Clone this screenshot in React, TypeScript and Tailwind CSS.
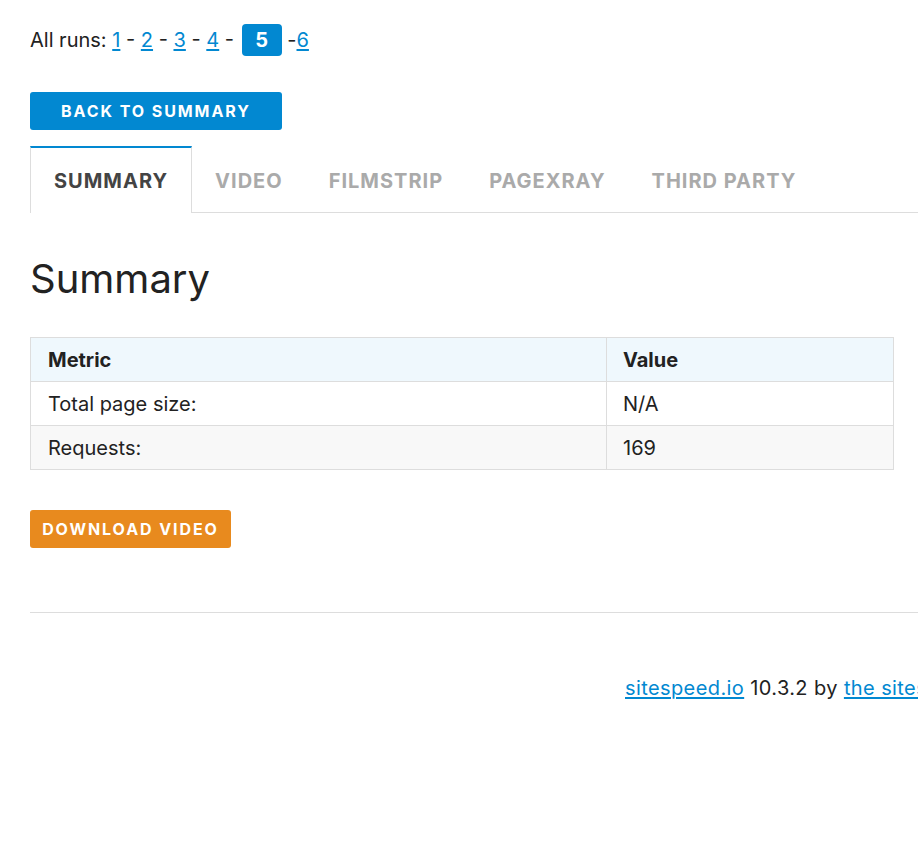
import React from 'react';

const tabs = ['Summary', 'Video', 'Filmstrip', 'PageXray', 'Third party'];

const App: React.FC = () => {
  const runs = [1, 2, 3, 4];

  return (
    <div className="min-h-screen w-[918px] overflow-hidden bg-white text-[#222] font-['Inter','Noto_Sans',sans-serif] text-[20px]">
      <div className="w-[1620px] pl-[30px] pt-[24px]">
        {/* Run selector */}
        <div className="flex items-center h-[32px] whitespace-nowrap">
          <span>All runs:&nbsp;</span>
          {runs.map((r) => (
            <span key={r}>
              <a href="#" className="text-[#0288d1] underline underline-offset-2">{r}</a>
              <span>&nbsp;-&nbsp;</span>
            </span>
          ))}
          <span className="ml-[2px] inline-flex items-center justify-center h-[32px] w-[40px] rounded-[4px] bg-[#0288d1] text-white font-bold">5</span>
          <span>&nbsp;-</span>
          <a href="#" className="text-[#0288d1] underline underline-offset-2">6</a>
        </div>

        {/* Back button */}
        <div className="mt-[36px]">
          <button className="h-[38px] w-[252px] rounded-[3px] bg-[#0288d1] text-white text-[16px] font-bold uppercase tracking-[0.12em]">
            Back to summary
          </button>
        </div>

        {/* Tabs */}
        <div className="mt-[16px] flex h-[67px] border-b border-[#ddd] w-[888px]">
          {tabs.map((t, i) =>
            i === 0 ? (
              <div
                key={t}
                className="-mb-px flex items-center px-[23px] border-t-2 border-t-[#0288d1] border-x border-x-[#ddd] bg-white text-[#444] font-bold uppercase tracking-[0.05em]"
              >
                {t}
              </div>
            ) : (
              <div key={t} className="-mb-px flex items-center px-[23px] border-t-2 border-transparent text-[#aaa] font-bold uppercase tracking-[0.05em]">
                {t}
              </div>
            )
          )}
        </div>

        {/* Heading */}
        <h1 className="mt-[40px] text-[40px] font-normal leading-[52px] text-[#222]">Summary</h1>

        {/* Table */}
        <table className="mt-[32px] w-[864px] border-collapse border border-[#ddd]">
          <thead>
            <tr className="h-[44px] bg-[#eff8fd]">
              <th className="w-[576px] border border-[#ddd] px-[17px] text-left font-bold">Metric</th>
              <th className="border border-[#ddd] px-[16px] text-left font-bold">Value</th>
            </tr>
          </thead>
          <tbody>
            <tr className="h-[44px] bg-white">
              <td className="border border-[#ddd] px-[17px]">Total page size:</td>
              <td className="border border-[#ddd] px-[16px]">N/A</td>
            </tr>
            <tr className="h-[44px] bg-[#f8f8f8]">
              <td className="border border-[#ddd] px-[17px]">Requests:</td>
              <td className="border border-[#ddd] px-[16px]">169</td>
            </tr>
          </tbody>
        </table>

        {/* Download */}
        <div className="mt-[40px]">
          <button className="h-[38px] w-[201px] rounded-[3px] bg-[#e88a1e] text-white text-[16px] font-bold uppercase tracking-[0.12em]">
            Download video
          </button>
        </div>

        <hr className="mt-[64px] border-t border-[#ddd]" />

        {/* Footer */}
        <div className="mt-[60px] pl-[595px] whitespace-nowrap tracking-[0.02em]">
          <a href="#" className="text-[#0288d1] underline underline-offset-2">sitespeed.io</a>
          <span> 10.3.2 by </span>
          <a href="#" className="text-[#0288d1] underline underline-offset-2">the sitespeed.io team</a>
        </div>
      </div>
    </div>
  );
};

export default App;
